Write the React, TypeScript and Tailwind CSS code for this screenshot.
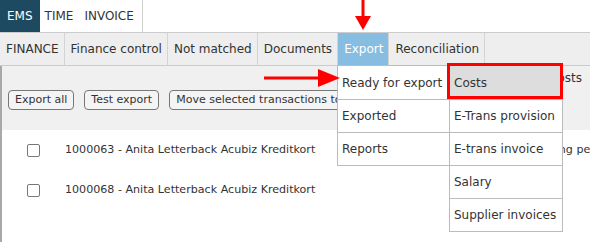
import React from 'react'

const subTabs = ['FINANCE', 'Finance control', 'Not matched', 'Documents', 'Export', 'Reconciliation']
const exportMenu = ['Ready for export', 'Exported', 'Reports']
const readyMenu = ['Costs', 'E-Trans provision', 'E-trans invoice', 'Salary', 'Supplier invoices']

const rows = [
  { id: '1000063', name: 'Anita Letterback Acubiz Kreditkort', note: 'Awaiting pending payment' },
  { id: '1000068', name: 'Anita Letterback Acubiz Kreditkort', note: '' },
]

function RedArrowDown() {
  return (
    <svg width="16" height="30" viewBox="0 0 16 30" className="absolute left-[355px] top-0">
      <rect x="6.5" y="0" width="3" height="18" fill="#ff0000" />
      <polygon points="0,16 16,16 8,30" fill="#ff0000" />
    </svg>
  )
}

function RedArrowRight() {
  return (
    <svg width="76" height="18" viewBox="0 0 76 18" className="absolute left-[264px] top-[69px]">
      <rect x="0" y="7.5" width="56" height="3" fill="#ff0000" />
      <polygon points="54,0 76,9 54,18" fill="#ff0000" />
    </svg>
  )
}

export default function App() {
  return (
    <div
      className="relative w-[590px] h-[242px] overflow-hidden bg-white text-[#333] text-[12px]"
      style={{ fontFamily: '"DejaVu Sans", Verdana, sans-serif' }}
    >
      {/* Top modules */}
      <div className="flex h-[32px]">
        <div className="flex items-center px-[7px] bg-[#1d4a60] text-white">EMS</div>
        <div className="flex items-center px-[5px]">TIME</div>
        <div className="flex items-center pl-[6px] pr-[8px] border-r border-[#d0d0d0]">INVOICE</div>
      </div>

      {/* Sub navigation */}
      <div className="flex h-[34px] bg-[#eeeeee] border-t border-b border-[#cccccc]">
        {subTabs.map((t) => (
          <div
            key={t}
            className={`flex items-center pl-[6px] pr-[5px] border-r border-[#d4d4d4] ${
              t === 'Export' ? 'bg-[#87bde0] text-white' : ''
            }`}
          >
            {t}
          </div>
        ))}
      </div>

      {/* Content */}
      <div className="border-l-[2px] border-[#a8a8a8] h-full">
        <div className="relative bg-[#f0f0f0] h-[64px] flex items-end pb-[20px] pl-[6px] gap-[10px] text-[11px]">
          <span className="absolute left-[547px] top-[3px] text-[12px]">Costs</span>
          <button className="h-[20px] px-[6px] rounded-[4px] border border-[#777] bg-[#f4f4f4]">Export all</button>
          <button className="h-[20px] px-[6px] rounded-[4px] border border-[#777] bg-[#f4f4f4]">Test export</button>
          <button className="h-[20px] px-[6px] rounded-[4px] border border-[#777] bg-[#f4f4f4] whitespace-nowrap">
            Move selected transactions to
          </button>
        </div>
        <div className="text-[11.1px]">
          {rows.map((r) => (
            <div key={r.id} className="flex items-center h-[40px] whitespace-nowrap">
              <span className="shrink-0 ml-[25px] w-[13px] h-[13px] rounded-[2px] border border-[#777] bg-white" />
              <span className="shrink-0 ml-[25px]">
                {r.id} - {r.name}
              </span>
              {r.note && <span className="shrink-0 ml-[210px]">{r.note}</span>}
            </div>
          ))}
        </div>
      </div>

      {/* Export dropdown */}
      <div className="absolute left-[337px] top-[65px] w-[113px] bg-white border border-[#bbbbbb]">
        {exportMenu.map((m, i) => (
          <div
            key={m}
            className={`h-[33px] flex items-center px-[4px] ${i > 0 ? 'border-t border-[#bbbbbb]' : ''}`}
          >
            {m}
          </div>
        ))}
      </div>

      {/* Ready for export submenu */}
      <div className="absolute left-[449px] top-[65px] w-[114px] bg-white border border-[#bbbbbb]">
        {readyMenu.map((m, i) => (
          <div
            key={m}
            className={`h-[33px] flex items-center px-[4px] ${i > 0 ? 'border-t border-[#bbbbbb]' : ''} ${
              i === 0 ? 'bg-[#dddddd]' : ''
            }`}
          >
            {m}
          </div>
        ))}
      </div>
      <div className="absolute left-[447px] top-[63px] w-[116px] h-[36px] border-[3px] border-[#ff0000]" />

      <RedArrowDown />
      <RedArrowRight />
    </div>
  )
}
